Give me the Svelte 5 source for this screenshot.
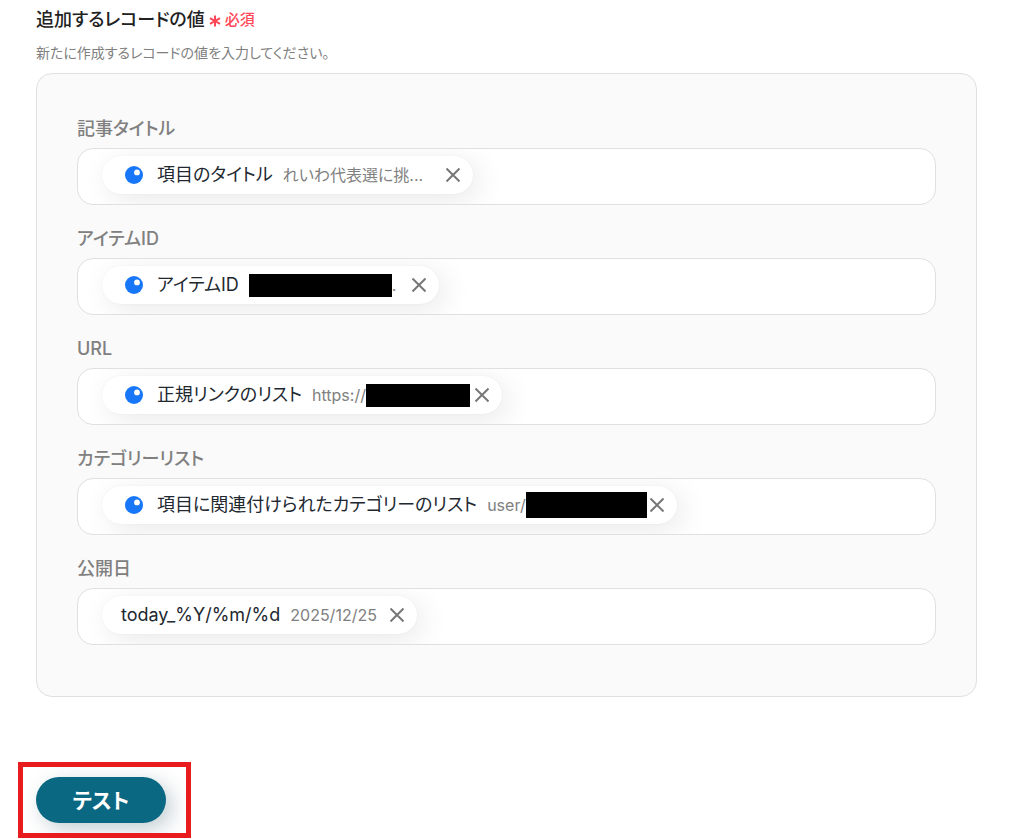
<script>
	let fields = $state([
		{ id: 'title', label: '記事タイトル', token: '項目のタイトル', value: 'れいわ代表選に挑...', wide: true, source: true },
		{ id: 'item', label: 'アイテムID', token: 'アイテムID', mask: 143, maskHeight: 23, after: '.', wide: true, source: true },
		{ id: 'url', label: 'URL', token: '正規リンクのリスト', value: 'https://', mask: 104, maskHeight: 23, wide: true, source: true },
		{ id: 'category', label: 'カテゴリーリスト', token: '項目に関連付けられたカテゴリーのリスト', value: 'user/', mask: 121, maskHeight: 26, wide: true, source: true },
		{ id: 'date', label: '公開日', token: 'today_%Y/%m/%d', value: '2025/12/25' }
	]);

	function clear(field) {
		field.token = null;
	}
</script>

<main>
	<header>
		<h1 id="record-title">追加するレコードの値</h1>
		<span class="required">
			<svg width="12" height="14" viewBox="0 0 12 14" aria-hidden="true">
				<path d="M6 2.5v11M1 5.2l10 5.6M11 5.2l-10 5.6" />
			</svg>
			必須
		</span>
	</header>
	<p class="help">新たに作成するレコードの値を入力してください。</p>

	<section class="panel" aria-labelledby="record-title">
		{#each fields as field (field.id)}
			<div class="field" role="group" aria-labelledby="label-{field.id}">
				<span class="label" id="label-{field.id}">{field.label}</span>
				<div class="box">
					{#if field.token}
						<div class="chip" class:plain={!field.source}>
							{#if field.source}
								<svg class="source" width="18" height="18" viewBox="0 0 18 18" aria-hidden="true">
									<circle cx="9" cy="9" r="9" fill="#1877f8" />
									<circle cx="12" cy="6.4" r="2.9" fill="#fff" />
								</svg>
							{/if}
							<span class="token">{field.token}</span>
							<span class="value" class:wide={field.wide}>
								{field.value ?? ''}{#if field.mask}<span
									class="mask"
									style="width: {field.mask}px; height: {field.maskHeight}px"
								></span>{/if}{field.after ?? ''}
							</span>
							<button class="remove" aria-label="削除" onclick={() => clear(field)}>
								<svg width="14" height="14" viewBox="0 0 14 14" aria-hidden="true">
									<path d="M0.5 0.5l13 13M13.5 0.5l-13 13" />
								</svg>
							</button>
						</div>
					{/if}
				</div>
			</div>
		{/each}
	</section>

	<div class="action">
		<button class="test">テスト</button>
		<div class="highlight"></div>
	</div>
</main>

<style>
	:global(body) {
		margin: 0;
		background: #fff;
	}

	main {
		padding: 6px 44px 0 36px;
		font-family: Inter, "Noto Sans CJK JP", sans-serif;
		font-feature-settings: "palt";
		color: #222;
	}

	header {
		display: flex;
		align-items: center;
		gap: 4px;
		height: 28px;
	}

	h1 {
		margin: 0;
		font-size: 18px;
		font-weight: 500;
		line-height: 28px;
	}

	.required {
		display: flex;
		align-items: center;
		gap: 4px;
		font-size: 15px;
		line-height: 28px;
		font-weight: 500;
		color: #ff4757;
	}

	.required path {
		fill: none;
		stroke: currentColor;
		stroke-width: 2;
	}

	.help {
		margin: 9px 0 10px;
		font-size: 14px;
		line-height: 20px;
		color: #808080;
	}

	.panel {
		display: flex;
		flex-direction: column;
		gap: 21px;
		padding: 42px 40px 51px;
		border: 1px solid #e0e0e0;
		border-radius: 16px;
		background: #fafafa;
	}

	.field {
		display: flex;
		flex-direction: column;
		gap: 6px;
	}

	.label {
		font-size: 18px;
		font-weight: 500;
		line-height: 26px;
		color: #808080;
	}

	.box {
		box-sizing: border-box;
		height: 57px;
		padding: 7px 24px;
		overflow: hidden;
		border: 1px solid #e0e0e0;
		border-radius: 16px;
		background: #fff;
	}

	.chip {
		display: inline-flex;
		align-items: center;
		height: 38px;
		padding: 0 13px 0 23px;
		border-radius: 19px;
		background: #fff;
		box-shadow: 6px 6px 30px rgba(0, 0, 0, 0.09), 0 0 2px rgba(0, 0, 0, 0.06);
		line-height: 40px;
		white-space: nowrap;
	}

	.chip.plain {
		padding-left: 19px;
	}

	.source {
		margin-right: 14px;
	}

	.token {
		margin-right: 10px;
		font-size: 18px;
		color: #222830;
	}

	.value {
		display: flex;
		align-items: center;
		margin-right: 13px;
		font-size: 16px;
		color: #808080;
	}

	.wide {
		width: 150px;
	}

	.mask {
		flex: none;
		background: #000;
	}

	button {
		padding: 0;
		border: 0;
		font-family: inherit;
		font-feature-settings: inherit;
		cursor: pointer;
	}

	.remove {
		display: flex;
		background: none;
	}

	.remove path {
		fill: none;
		stroke: #777;
		stroke-width: 2;
	}

	.action {
		position: relative;
		width: fit-content;
		margin-top: 80px;
		padding-bottom: 15px;
	}

	.test {
		display: block;
		width: 130px;
		height: 46px;
		padding-bottom: 2px;
		border-radius: 23px;
		background: #0b6883;
		box-shadow: 6px 6px 20px rgba(11, 60, 80, 0.25);
		font-size: 21px;
		font-weight: 700;
		color: #fff;
	}

	.highlight {
		position: absolute;
		inset: -15px -25px 0 -18px;
		border: 5px solid #e81c1f;
		pointer-events: none;
	}
</style>
